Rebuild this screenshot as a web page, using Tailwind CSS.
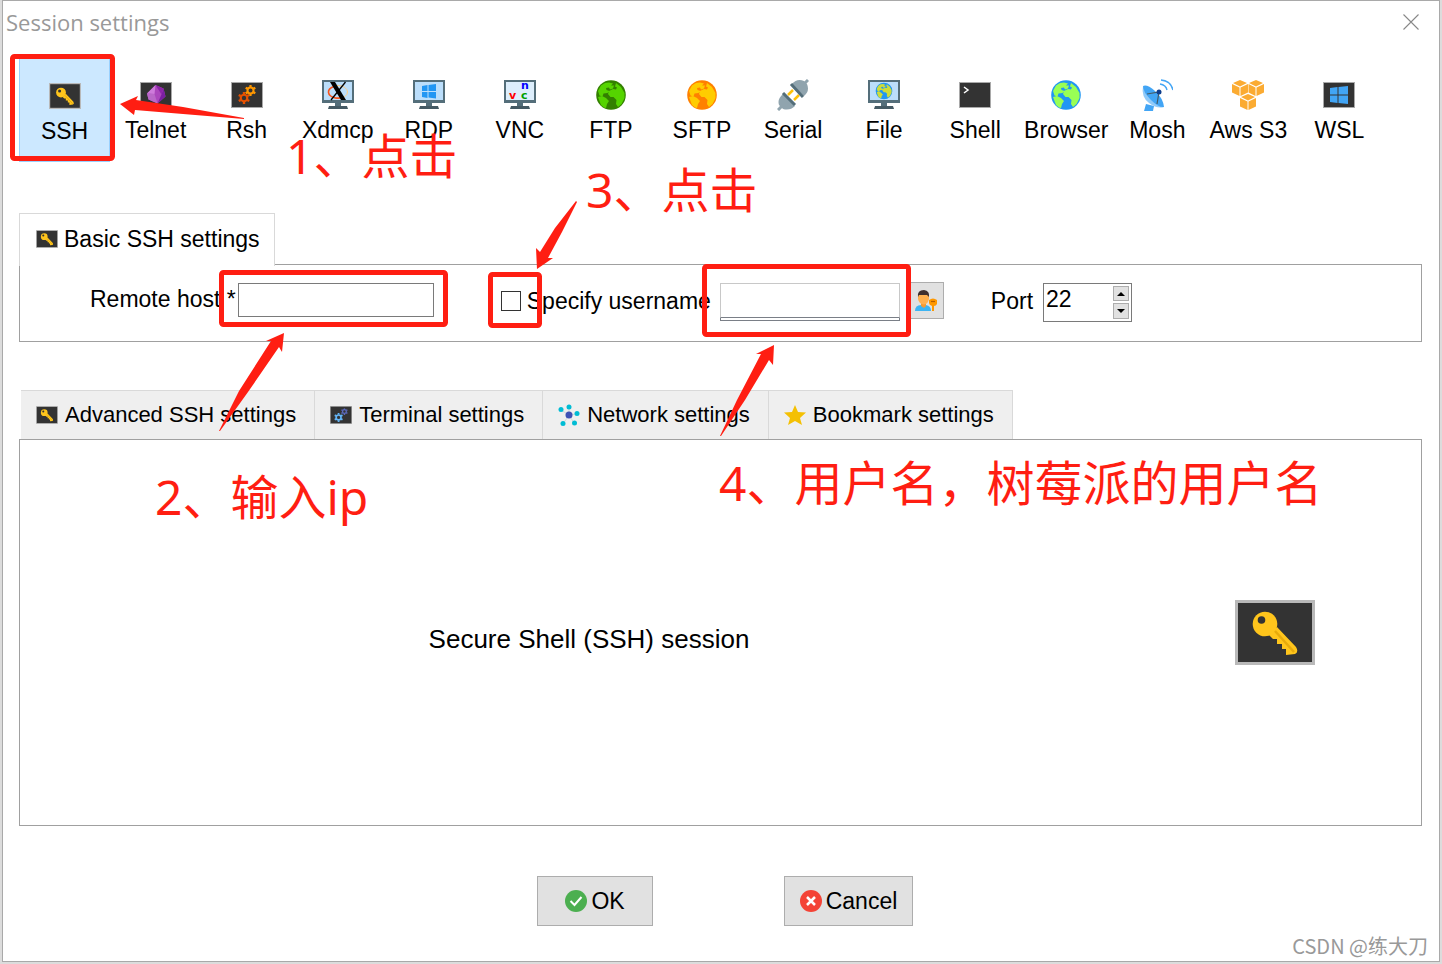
<!DOCTYPE html>
<html lang="en">
<head>
  <meta charset="UTF-8" />
  <meta name="viewport" content="width=device-width, initial-scale=1.0" />
  <title>Session settings</title>
  <script src="https://cdn.jsdelivr.net/npm/@tailwindcss/browser@4"></script>
</head>
<body class="bg-[#dcdcdc] font-['Liberation_Sans',Arial,sans-serif] text-[23px] leading-6 text-black">

  <!-- shared icons -->
  <svg class="hidden">
    <symbol id="key" viewBox="0 0 80 65">
      <path fill="#b9b9b9" d="M0 0h80v65H0z" />
      <path fill="#333" d="M3 3h74v59H3z" />
      <path fill="#ffc51c" d="M42 27 61 47q3 5-1 7l-9 1v-6h-4v-5h-5v-5h-4l-4-4z" />
      <circle cx="30" cy="24" r="12.3" fill="#ffc51c" />
      <path stroke="#e8ab0c" stroke-width="2.5" d="m40 31 19 21" />
      <circle cx="26.500" cy="20" r="3.800" fill="#333" />
    </symbol>
    <symbol id="screen" viewBox="0 0 32 32">
      <path fill="#a9a9a9" d="M0 3h32v26H0z" />
      <path fill="#333" d="M1 4h30v24H1z" />
    </symbol>
    <symbol id="monitor" viewBox="0 0 32 32">
      <path fill="#546e7a" d="M0 1h32v23H0zM13 24h6v3h-6z" />
      <path fill="#455a64" d="M7 27h18l1 3H6z" />
      <path fill="#bbdefb" d="M2 3h28v18H2z" />
    </symbol>
    <symbol id="gear" viewBox="-5.500 -5.500 11 11">
      <circle r="3" fill="none" stroke="currentColor" stroke-width="2" />
      <path stroke="currentColor" stroke-width="2.200" d="M0-5.500v2M0 3.500v2M-4.800-2.800l1.800 1M3 1.800l1.800 1M4.800-2.800l-1.800 1M-3 1.800l-1.800 1" />
    </symbol>
    <symbol id="globe" viewBox="0 0 32 32">
      <circle cx="16" cy="16" r="14.800" />
      <path fill="currentColor" d="M3 12 6 6.500 10 4l4-.500 4 1-2 2 3 0-1 3-3 1-1-2-3 .500.500 2 3 1-2 2-4 .500-1 3-3-1zM3 18l4-1 4 2 3 3-2 3-1 4-2-.500L6 26zM21 4l5 4 3.500 6v5l-3 6-3.500 3-2-3 .500-4-3-3-3 0-2.500-3 1-3 4-2 3 .500 1-2-2-1z" />
    </symbol>
  </svg>

  <div class="relative min-h-screen p-0.5 pt-0 flex">
    <main class="flex-1 flex flex-col bg-white border border-[#a9a9a9] pb-[35px]">
      <header class="flex items-center justify-between h-[57px] pb-4 pl-[3px] pr-5">
        <h1 class="font-['Open_Sans',sans-serif] text-[22px] text-[#999]">Session settings</h1>
        <button type="button" aria-label="Close">
          <svg class="size-4" viewBox="0 0 16 16" stroke="#888" stroke-width="1.100"><path d="m0.500.500 15 15m0-15-15 15" /></svg>
        </button>
      </header>

      <!-- session types -->
      <nav class="grid grid-cols-15 ml-4 mr-[54px] h-[104px] text-center">
        <button type="button" class="flex flex-col items-center gap-[7px] pt-[21px] bg-[#cce8ff] border border-[#99d1ff]">
          <svg class="w-8 h-8 py-[3px]"><use href="#key" /></svg>SSH
        </button>
        <button type="button" class="flex flex-col items-center gap-[7px] pt-[21px]">
          <svg class="size-8" viewBox="0 0 32 32"><use href="#screen" />
            <path fill="#ab47bc" d="m15.500 6 8 3.500 2 8-8 7-9-4-1.500-6z" />
            <path fill="#ce7bdb" d="m15.500 6-1 9-7.500-.500z" /><path fill="#7b1fa2" d="m23.500 9.500 2 8-8 7 4-9z" />
            <path fill="#ba68c8" d="m14.500 15-7.500-.500 1.500 6 9 4z" /><path fill="#8e24aa" d="m15.500 6 8 3.500-2 6z" />
          </svg>Telnet
        </button>
        <button type="button" class="flex flex-col items-center gap-[7px] pt-[21px]">
          <svg class="size-8" viewBox="0 0 32 32"><use href="#screen" />
            <use href="#gear" x="7" y="13" width="12" height="12" class="text-[#e65100]" />
            <use href="#gear" x="14" y="6" width="11" height="11" class="text-[#ff9800]" />
          </svg>Rsh
        </button>
        <button type="button" class="flex flex-col items-center gap-[7px] pt-[21px]">
          <svg class="size-8" viewBox="0 0 32 32"><use href="#monitor" />
            <ellipse cx="16" cy="13" rx="9.500" ry="6.500" fill="none" stroke="#ffcc80" />
            <path fill="none" stroke="#f4511e" stroke-width="1.600" d="M12 7.500q-6 2-5.500 6t7 5.500q4 .500 6-.500" />
            <path fill="#000" d="M8 3h5l11 18h-5z" /><path stroke="#000" stroke-width="1.300" d="M23.500 3 9 21" />
          </svg>Xdmcp
        </button>
        <button type="button" class="flex flex-col items-center gap-[7px] pt-[21px]">
          <svg class="size-8" viewBox="0 0 32 32"><use href="#monitor" />
            <path fill="#2196f3" d="m9 7 5.500-1v6H9zm6.500-1L23 5v7h-7.500zM9 13h5.500v6L9 18zm6.500 0H23v6.500l-7.500-1z" />
          </svg>RDP
        </button>
        <button type="button" class="flex flex-col items-center gap-[7px] pt-[21px]">
          <svg class="size-8" viewBox="0 0 32 32"><use href="#monitor" /><path fill="#ddeefc" d="M2 3h28v18H2z" />
            <g class="font-['DejaVu_Sans'] font-bold text-[11px]">
              <text x="5" y="20" fill="#f00">v</text><text x="17" y="20" fill="#00a000">c</text><text x="17" y="10" fill="#00f">n</text>
            </g>
          </svg>VNC
        </button>
        <button type="button" class="flex flex-col items-center gap-[7px] pt-[21px]">
          <svg class="size-8 fill-[#338000] text-[#55d400]"><use href="#globe" /></svg>FTP
        </button>
        <button type="button" class="flex flex-col items-center gap-[7px] pt-[21px]">
          <svg class="size-8 fill-[#ff8000] text-[#ffcc00]"><use href="#globe" /></svg>SFTP
        </button>
        <button type="button" class="flex flex-col items-center gap-[7px] pt-[21px]">
          <svg class="size-8" viewBox="0 0 32 32">
            <path stroke="#90a4ae" stroke-width="3" d="m1 31 5-5m20-20 5-5" />
            <path fill="#90a4ae" d="m6 15 12 12q-5 5-12 3l-4-4q-2-6 4-11zM15 5q5-6 12-3l3 3q3 7-3 12z" />
            <path stroke="#ffc107" stroke-width="2.500" d="m11 16 5-5m1 10 5-5" />
            <path stroke="#546e7a" stroke-width="3" d="m6 14 12 12M14 5l12 13" />
          </svg>Serial
        </button>
        <button type="button" class="flex flex-col items-center gap-[7px] pt-[21px]">
          <svg class="size-8" viewBox="0 0 32 32"><use href="#monitor" />
            <use href="#globe" x="7" y="3" width="18" height="18" class="fill-[#2196f3] text-[#cddc39]" />
          </svg>File
        </button>
        <button type="button" class="flex flex-col items-center gap-[7px] pt-[21px]">
          <svg class="size-8" viewBox="0 0 32 32"><use href="#screen" /><path fill="none" stroke="#fff" stroke-width="1.500" d="m5 8 4 3-4 3" /></svg>Shell
        </button>
        <button type="button" class="flex flex-col items-center gap-[7px] pt-[21px]">
          <svg class="size-8 fill-[#2196f3] text-[#99ff55]"><use href="#globe" /></svg>Browser
        </button>
        <button type="button" class="flex flex-col items-center gap-[7px] pt-[21px]">
          <svg class="size-8" viewBox="0 0 32 32">
            <path fill="#42a5f5" d="m5 25 8 2-1 5H3z" />
            <path fill="#90caf9" d="M2 7Q0 18 8 24q8 6 15 4z" />
            <path fill="#42a5f5" d="M2 7q4-2 12 5t9 16q-5 1-13-7T2 7z" />
            <path fill="none" stroke="#455a64" stroke-width="1.200" d="m6 15 12-2-2 12" />
            <circle cx="18" cy="13" r="2.500" fill="#0d3c8c" />
            <path fill="none" stroke="#42a5f5" stroke-width="1.400" d="M19 5q6 1 7 6M20 1q10 1 12 10" />
          </svg>Mosh
        </button>
        <button type="button" class="flex flex-col items-center gap-[7px] pt-[21px] whitespace-nowrap">
          <svg class="w-[34px] h-8" viewBox="0 0 34 32" fill="#fbab32">
            <path d="m9 1 7 3-7 3.500L2 4zM1 5l7.500 3.500V17L1 13.500zm16 0v8.500L9.500 17V8.500z" />
            <path d="m25 1 7 3-7 3.500L18 4zm-7.500 4 7 3.500V17l-7-3.500zM33 5v8.500L25.500 17V8.500z" />
            <path d="m17 15 7 3-7 3.500-7-3.500zm-8 4 7.500 3.500V31L9 27.500zm16 0v8.500L17.500 31v-8.500z" />
          </svg>Aws S3
        </button>
        <button type="button" class="flex flex-col items-center gap-[7px] pt-[21px]">
          <svg class="size-8" viewBox="0 0 32 32"><use href="#screen" />
            <path fill="#42a5f5" d="m7 9 7.500-1v7.500H7zM15.500 8 25 7v8.500h-9.500zM7 16.500h7.500V24L7 23zm8.500 0H25V25l-9.500-1z" />
          </svg>WSL
        </button>
      </nav>

      <!-- basic settings -->
      <section class="mt-[51px] ml-4 mr-[17px]">
        <div class="relative w-fit h-[53px] -mb-0.5 flex items-center gap-1.5 pl-4 pr-3.5 pb-0.5 bg-white border border-b-0 border-[#d9d9d9]">
          <svg class="w-[22px] h-[18px]"><use href="#key" /></svg>
          <h2>Basic SSH settings</h2>
        </div>
        <form class="flex items-start h-[78px] pt-[18px] pl-[70px] border border-[#a0a0a0]">
          <label for="host" class="leading-8">Remote host *</label>
          <input id="host" type="text" class="ml-0.5 w-[196px] h-[34px] border border-[#7a7a7a]" />
          <input id="useName" type="checkbox" class="appearance-none ml-[67px] mt-2 size-5 border border-[#333]" />
          <label for="useName" class="ml-1.5 leading-9">Specify username</label>
          <div class="ml-[9px] w-[180px] border border-[#7a7f87] h-[38px]">
            <input type="text" aria-label="Username" class="block -mx-px -mt-px w-[180px] h-[35px] bg-white border border-[#c8c8c8] border-b-[#7a7f87]" />
          </div>
          <button type="button" aria-label="Choose user" class="ml-1.5 -mt-px w-[38px] h-[37px] flex items-center justify-end pr-[5px] bg-[#e1e1e1] border border-[#adadad]">
            <svg class="w-6 h-6" viewBox="0 0 24 24">
              <path fill="#3db4f2" d="M1 22q0-6 6-6h5q5 1 5 6z" />
              <path fill="#f59a33" d="M7 13h5v4l-2 2-3-2z" /><path fill="#ffb04f" d="M4 6h11v4q-1 5-5 5.500Q5 15 4 10z" />
              <path fill="#3e2f2f" d="M4 8Q3 1 10 1q6 1 5 7l-2-2-6 0-2 0z" />
              <path fill="#ff9800" d="M15 11q4-3 8 0v4q-1 2-3 2v5h-2v-5q-3-1-3-3z" /><path stroke="#b35d00" stroke-width="1.200" d="M17 12.500h4" />
            </svg>
          </button>
          <label for="port" class="ml-[47px] leading-9">Port</label>
          <div class="ml-2.5 flex w-[89px] h-[39px] border border-[#7a7a7a]">
            <input id="port" type="text" inputmode="numeric" value="22" class="min-w-0 flex-1 h-[30px] pl-0.5" />
            <div class="flex flex-col gap-0.5 p-0.5">
              <button type="button" aria-label="Port up" class="grid place-items-center w-4 h-[15px] bg-[#e1e1e1] border border-[#adadad]"><svg class="w-2 h-1" viewBox="0 0 8 4"><path d="m0 4 4-4 4 4z" /></svg></button>
              <button type="button" aria-label="Port down" class="grid place-items-center w-4 h-4 bg-[#e1e1e1] border border-[#adadad]"><svg class="w-2 h-1" viewBox="0 0 8 4"><path d="m0 0 4 4 4-4z" /></svg></button>
            </div>
          </div>
        </form>
      </section>

      <!-- advanced settings -->
      <section class="mt-12 ml-4 mr-[17px] flex-1 flex flex-col">
        <div class="flex ml-0.5 h-[49px] text-[22px]">
          <button type="button" class="flex items-center gap-[7px] pl-[15px] pr-[18px] bg-[#efefef] border-t border-r border-[#d9d9d9]">
            <svg class="w-[22px] h-[18px]"><use href="#key" /></svg>Advanced SSH settings
          </button>
          <button type="button" class="flex items-center gap-[7px] pl-[15px] pr-[18px] bg-[#efefef] border-t border-r border-[#d9d9d9]">
            <svg class="w-[22px] h-[18px]" viewBox="0 3 32 26"><use href="#screen" width="32" height="32" />
              <use href="#gear" x="6" y="13" width="13" height="13" class="text-[#64b5f6]" />
              <use href="#gear" x="16" y="6" width="10" height="10" class="text-[#5c6bc0]" />
            </svg>Terminal settings
          </button>
          <button type="button" class="flex items-center gap-[7px] pl-[15px] pr-[18px] bg-[#efefef] border-t border-r border-[#d9d9d9]">
            <svg class="size-[22px]" viewBox="0 0 22 22">
              <path stroke="#cfd8dc" d="m11 11V3m0 8 8-1m-8 1 5 8m-5-8-6 9m6-9L3 6" />
              <g fill="#00bcd4"><circle cx="11" cy="3" r="2.500" /><circle cx="3" cy="5.500" r="2.500" /><circle cx="19" cy="9.500" r="2.500" /><circle cx="16.500" cy="19" r="2.500" /><circle cx="5" cy="19.500" r="2.500" /></g>
              <circle cx="11" cy="11" r="3.500" fill="#3f51b5" />
            </svg>Network settings
          </button>
          <button type="button" class="flex items-center gap-[7px] pl-[15px] pr-[18px] bg-[#efefef] border-t border-r border-[#d9d9d9]">
            <svg class="size-[22px]" viewBox="0 0 22 22" fill="#f4c003"><path d="m11 1 3 7 8 .500-6 5.500 2 7-7-4-7 4 2-7-6-5.500L8 8z" /></svg>Bookmark settings
          </button>
        </div>
        <div class="flex-1 flex items-center border border-[#a0a0a0]">
          <p class="flex-1 pt-3 text-center text-[26px]">Secure Shell (SSH) session</p>
          <svg class="ml-[77px] mr-[106px] w-20 h-[65px]"><use href="#key" /></svg>
        </div>
      </section>

      <footer class="flex justify-center gap-[131px] mt-[50px] pl-2">
        <button type="button" class="flex items-center justify-center gap-1 w-[116px] h-[50px] bg-[#e1e1e1] border border-[#adadad]">
          <svg class="size-[22px]" viewBox="0 0 22 22"><circle cx="11" cy="11" r="11" fill="#4caf50" /><path fill="none" stroke="#fff" stroke-width="2" d="m5.500 11 4 4 7-8" /></svg>OK
        </button>
        <button type="button" class="flex items-center justify-center gap-1 w-[129px] h-[50px] bg-[#e1e1e1] border border-[#adadad]">
          <svg class="size-[22px]" viewBox="0 0 22 22"><circle cx="11" cy="11" r="11" fill="#f44336" /><path stroke="#fff" stroke-width="2.500" d="m7 7 8 8m0-8-8 8" /></svg>Cancel
        </button>
      </footer>
    </main>

    <!-- step notes drawn over the dialog -->
    <svg class="absolute left-0 top-0 w-[1442px] h-[964px] pointer-events-none" viewBox="0 0 1442 964" fill="#ff1e12">
      <g fill="none" stroke="#ff1e12" stroke-width="5">
        <rect x="12.500" y="56.500" width="100" height="102" rx="2" />
        <rect x="221.500" y="272.500" width="224" height="52" rx="2" />
        <rect x="490.500" y="274.500" width="49" height="51" rx="2" />
        <rect x="704.500" y="266.500" width="204" height="68" rx="2" />
      </g>
      <path d="m120 104 18-8-2 4 47 7 61 11v1l-61-5-48-4-1 5z" />
      <path d="m284 333-18 8h5l-32 50-20 40h1l28-39 31-45 3 5z" />
      <path d="m576 201-21 27-15 24-4-4 1 21 16-11h-5l14-26 15-30z" />
      <path d="m774 345-18 9h5l-24 46-17 36h1l24-36 24-40 4 5z" />
    </svg>
    <div class="pointer-events-none whitespace-nowrap font-['Noto_Sans','Noto_Sans_CJK_SC',sans-serif] text-5xl leading-[60px] text-[#ff1e12]">
      <p class="absolute left-[286px] top-[126px]">1、点击</p>
      <p class="absolute left-[155px] top-[467px]">2、输入ip</p>
      <p class="absolute left-[586px] top-[160px]">3、点击</p>
      <p class="absolute left-[719px] top-[453px]">4、用户名，树莓派的用户名</p>
    </div>
    <p class="absolute right-3.5 bottom-1 font-['Noto_Sans_CJK_SC',sans-serif] text-xl text-[#999]">CSDN @练大刀</p>
  </div>
</body>
</html>
